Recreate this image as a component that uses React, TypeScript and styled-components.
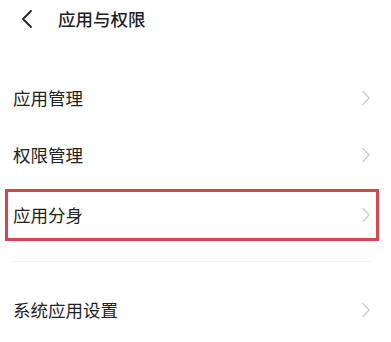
import React from "react";
import styled, { createGlobalStyle } from "styled-components";

const GlobalStyle = createGlobalStyle`
  html, body {
    margin: 0;
    padding: 0;
    background: #ffffff;
  }
  body {
    font-family: "Noto Sans CJK SC", "Noto Sans", sans-serif;
    color: #222222;
  }
`;

const Page = styled.div`
  width: 391px;
  height: 342px;
  overflow: hidden;
  background: #ffffff;
`;

const Header = styled.div`
  height: 38px;
  display: flex;
  align-items: center;
  padding-left: 20px;
`;

const BackBtn = styled.button`
  background: none;
  border: none;
  padding: 0;
  width: 14px;
  height: 20px;
  display: flex;
  align-items: center;
  justify-content: center;
  cursor: pointer;
  svg {
    width: 14px;
    height: 20px;
  }
`;

const Title = styled.h1`
  margin: 0 0 0 24px;
  font-size: 17.5px;
  font-weight: 500;
  line-height: 1;
  color: #1f1f1f;
`;

const List = styled.div`
  padding-top: 31px;
`;

const Row = styled.div<{ $gap?: number }>`
  height: 57px;
  margin-top: ${(p) => p.$gap ?? 0}px;
  display: flex;
  align-items: center;
  justify-content: space-between;
  padding: 0 20px 0 13px;
`;

const HighlightRow = styled.div`
  height: 52px;
  box-sizing: border-box;
  margin: 6px 12px 0 5px;
  border: 3px solid #d8454c;
  display: flex;
  align-items: center;
  justify-content: space-between;
  padding: 0 5px 0 5px;
`;

const Label = styled.span`
  font-size: 17.5px;
  line-height: 1;
  color: #222222;
`;

const Divider = styled.div`
  height: 1px;
  margin: 20px 18px 0 10px;
  background: #f4f4f4;
`;

const Chevron = () => (
  <svg width="10" height="16" viewBox="0 0 10 16" fill="none">
    <path d="M2 1.5 L8 8 L2 14.5" stroke="#cccccc" strokeWidth="1.3" strokeLinecap="round" strokeLinejoin="round" />
  </svg>
);

export default function App() {
  return (
    <Page>
      <GlobalStyle />
      <Header>
        <BackBtn>
          <svg viewBox="0 0 14 20" fill="none">
            <path d="M11 2 L3 10 L11 18" stroke="#222" strokeWidth="1.8" strokeLinecap="round" strokeLinejoin="round" />
          </svg>
        </BackBtn>
        <Title>应用与权限</Title>
      </Header>
      <List>
        <Row>
          <Label>应用管理</Label>
          <Chevron />
        </Row>
        <Row>
          <Label>权限管理</Label>
          <Chevron />
        </Row>
        <HighlightRow>
          <Label>应用分身</Label>
          <Chevron />
        </HighlightRow>
        <Divider />
        <Row $gap={19}>
          <Label>系统应用设置</Label>
          <Chevron />
        </Row>
      </List>
    </Page>
  );
}
